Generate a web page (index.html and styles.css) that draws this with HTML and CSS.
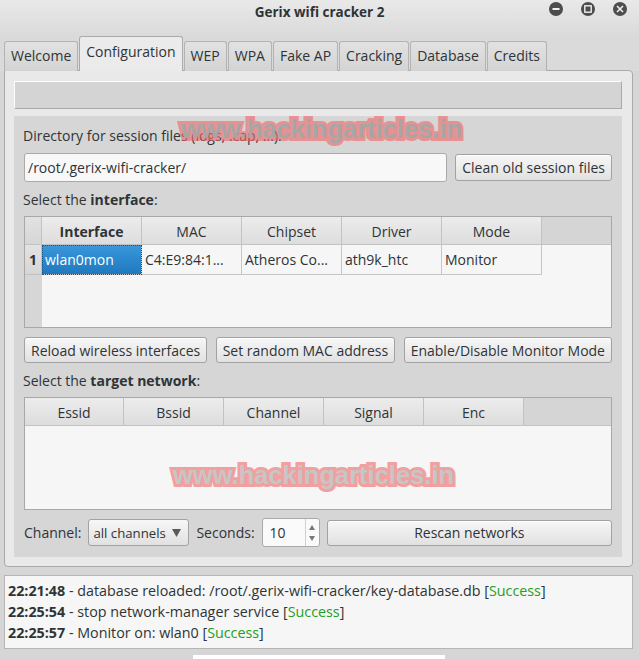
FILE: index.html
```html
<!DOCTYPE html>
<html lang="en">
<head>
  <meta charset="UTF-8">
  <title>Gerix wifi cracker 2</title>
  <link rel="stylesheet" href="styles.css">
</head>
<body>
  <div class="window">
    <header class="titlebar">
      <span></span>
      <span class="title">Gerix wifi cracker 2</span>
      <svg class="controls" width="80" height="16" viewBox="0 0 80 16">
        <circle cx="8" cy="8" r="7" fill="#4d4d4d"/>
        <rect x="4.5" y="7" width="7" height="2" fill="#f0f0f0"/>
        <circle cx="40" cy="8" r="7" fill="#4d4d4d"/>
        <rect x="36.8" y="4.8" width="6.4" height="6.4" fill="none" stroke="#f0f0f0" stroke-width="1.4"/>
        <circle cx="72" cy="8" r="7" fill="#4d4d4d"/>
        <path d="M69 5 L75 11 M75 5 L69 11" stroke="#f0f0f0" stroke-width="1.6"/>
      </svg>
    </header>

    <nav class="tabs">
      <div class="tab">Welcome</div>
      <div class="tab active">Configuration</div>
      <div class="tab">WEP</div>
      <div class="tab">WPA</div>
      <div class="tab">Fake AP</div>
      <div class="tab">Cracking</div>
      <div class="tab">Database</div>
      <div class="tab">Credits</div>
    </nav>

    <section class="panel">
      <div class="progress"></div>
      <div class="group">
        <p class="label">Directory for session files (logs, .cap, ...):</p>
        <div class="row dir-row">
          <div class="text-field">/root/.gerix-wifi-cracker/</div>
          <button class="btn">Clean old session files</button>
        </div>

        <p class="label">Select the <b>interface</b>:</p>
        <div class="table iface-table">
          <div class="th corner"></div>
          <div class="th sorted">Interface</div>
          <div class="th">MAC</div>
          <div class="th">Chipset</div>
          <div class="th">Driver</div>
          <div class="th">Mode</div>
          <div class="th filler"></div>

          <div class="row-head">1</div>
          <div class="td selected">wlan0mon</div>
          <div class="td">C4:E9:84:1...</div>
          <div class="td">Atheros Co...</div>
          <div class="td">ath9k_htc</div>
          <div class="td">Monitor</div>
          <div class="empty"></div>

          <div class="row-head rest"></div>
          <div class="empty wide"></div>
        </div>

        <div class="row btn-row">
          <button class="btn">Reload wireless interfaces</button>
          <button class="btn">Set random MAC address</button>
          <button class="btn">Enable/Disable Monitor Mode</button>
        </div>

        <p class="label">Select the <b>target network</b>:</p>
        <div class="table net-table">
          <div class="th">Essid</div>
          <div class="th">Bssid</div>
          <div class="th">Channel</div>
          <div class="th">Signal</div>
          <div class="th">Enc</div>
          <div class="th filler"></div>
          <div class="empty wide"></div>
        </div>

        <div class="row scan-row">
          <span>Channel:</span>
          <div class="combo">
            <span>all channels</span>
            <svg width="9" height="8" viewBox="0 0 9 8"><path d="M0 0 H9 L4.5 8 Z" fill="#5a5a5a"/></svg>
          </div>
          <span>Seconds:</span>
          <div class="spin">
            <span class="spin-value">10</span>
            <div class="spin-arrows">
              <svg width="6" height="5" viewBox="0 0 6 5"><path d="M0 5 L3 0 L6 5 Z" fill="#777"/></svg>
              <svg width="6" height="5" viewBox="0 0 6 5"><path d="M0 0 L3 5 L6 0 Z" fill="#777"/></svg>
            </div>
          </div>
          <button class="btn rescan">Rescan networks</button>
        </div>
      </div>
    </section>

    <section class="log">
      <p><b>22:21:48</b> - database reloaded: /root/.gerix-wifi-cracker/key-database.db [<span class="ok">Success</span>]</p>
      <p><b>22:25:54</b> - stop network-manager service [<span class="ok">Success</span>]</p>
      <p><b>22:25:57</b> - Monitor on: wlan0 [<span class="ok">Success</span>]</p>
    </section>

    <div class="dock"></div>

    <div class="watermark wm-top">
      <span class="wm-outline">www.hackingarticles.in</span>
      <span class="wm-fill">www.hackingarticles.in</span>
    </div>
    <div class="watermark wm-bottom">
      <span class="wm-outline">www.hackingarticles.in</span>
      <span class="wm-fill">www.hackingarticles.in</span>
    </div>
  </div>
</body>
</html>
```

FILE: styles.css
```css
* {
  box-sizing: border-box;
  margin: 0;
  padding: 0;
}

body {
  font-family: 'Open Sans', 'Noto Sans', sans-serif;
  font-size: 14px;
  color: #2e3436;
  background: #d6d6d6;
  width: 639px;
  height: 659px;
  overflow: hidden;
}

.window {
  position: relative;
  height: 659px;
}

/* title bar */
.titlebar {
  display: grid;
  grid-template-columns: 1fr auto 1fr;
  align-items: start;
  height: 36px;
  padding-top: 1px;
  background: linear-gradient(#e9e9e9, #dadada);
}

.title {
  font-weight: bold;
  font-size: 13.5px;
  line-height: 22px;
}

.controls {
  justify-self: end;
  margin-right: 11px;
}

/* tabs */
.tabs {
  display: flex;
  align-items: flex-end;
  height: 35px;
  padding-left: 4px;
  background: #dadada;
}

.tab {
  height: 30px;
  line-height: 28px;
  padding: 0 6px;
  border: 1px solid #b3b3b3;
  border-bottom: none;
  border-radius: 3px 3px 0 0;
  background: linear-gradient(#e2e2e2, #d3d3d3);
  margin-right: 1px;
}

.tab.active {
  position: relative;
  z-index: 1;
  height: 35px;
  line-height: 30px;
  background: #ebebeb;
  border-color: #aaaaaa;
}

/* tab page */
.panel {
  margin: -1px 6px 0 4px;
  border: 1px solid #a9a9a9;
  border-radius: 0 4px 4px 4px;
  background: #e9e9e9;
  padding: 10px 10px 9px 9px;
}

.progress {
  height: 28px;
  background: #d4d4d4;
  border-top: 1px solid #fdfdfd;
  border-left: 1px solid #fdfdfd;
  border-right: 1px solid #a9a9a9;
  border-bottom: 1px solid #a9a9a9;
  margin-bottom: 7px;
}

.group {
  background: #d6d6d6;
  padding: 10px 10px 10px 10px;
}

.label {
  height: 20px;
  line-height: 20px;
  margin-left: -1px;
}

.row {
  display: flex;
  align-items: center;
}

.dir-row {
  margin-top: 7px;
  height: 29px;
  gap: 8px;
}

.text-field {
  flex: 1;
  height: 29px;
  line-height: 27px;
  padding-left: 3px;
  background: #f8f8f8;
  border: 1px solid #aaaaaa;
  border-radius: 3px;
}

.btn {
  height: 26px;
  padding: 0 6px;
  font: inherit;
  color: #2e3436;
  white-space: nowrap;
  border: 1px solid #a2a2a2;
  border-radius: 3px;
  background: linear-gradient(#f7f7f7, #e1e1e1);
  box-shadow: inset 0 1px #ffffff;
}

.dir-row .btn {
  height: 27px;
  padding: 0 6px;
}

.group .label:nth-of-type(2),
.group .label:nth-of-type(3) {
  margin-top: 8px;
}

/* tables */
.table {
  margin-top: 6px;
  display: grid;
  border: 1px solid #a8a8a8;
  background: #f6f6f6;
}

.iface-table {
  height: 112px;
  grid-template-columns: 17px repeat(5, 100px) 1fr;
  grid-template-rows: 28px 30px 1fr;
}

.net-table {
  height: 113px;
  grid-template-columns: 99px repeat(4, 100px) 1fr;
  grid-template-rows: 28px 1fr;
}

.th {
  display: flex;
  align-items: center;
  justify-content: center;
  padding-top: 1px;
  background: linear-gradient(#ececec, #dddddd);
  border-right: 1px solid #c2c2c2;
  border-bottom: 1px solid #c2c2c2;
}

.th.sorted {
  font-weight: bold;
}

.th.filler {
  background: #d5d5d5;
  border-right: none;
}

.th.corner,
.row-head {
  background: linear-gradient(#e2e2e2, #d6d6d6);
}

.row-head {
  display: flex;
  align-items: center;
  justify-content: center;
  font-weight: bold;
  border-right: 1px solid #c2c2c2;
  border-bottom: 1px solid #c2c2c2;
}

.row-head.rest {
  background: #d6d6d6;
  border-bottom: none;
  border-right: none;
}

.td {
  display: flex;
  align-items: center;
  padding-left: 3px;
  border-right: 1px solid #c6c6c6;
  border-bottom: 1px solid #c6c6c6;
  white-space: nowrap;
  overflow: hidden;
}

.td.selected {
  color: #ffffff;
  background: linear-gradient(#3a97dc, #1f79bf);
  outline: 1px dotted #15548a;
  outline-offset: -1px;
}

.empty.wide {
  grid-column: 2 / -1;
}

.net-table .empty.wide {
  grid-column: 1 / -1;
}

.btn-row {
  margin-top: 9px;
  height: 26px;
  justify-content: space-between;
}

.scan-row {
  margin-top: 8px;
  height: 29px;
  gap: 7px;
}

.combo {
  display: flex;
  align-items: center;
  justify-content: space-between;
  width: 101px;
  height: 27px;
  padding: 0 7px 0 4px;
  font-size: 13.2px;
  border: 1px solid #a2a2a2;
  border-radius: 3px;
  background: linear-gradient(#f7f7f7, #e1e1e1);
}

.spin {
  display: flex;
  width: 58px;
  height: 29px;
  border: 1px solid #aaaaaa;
  border-radius: 3px;
  background: #fafafa;
}

.spin-value {
  flex: 1;
  line-height: 27px;
  padding-left: 7px;
}

.spin-arrows {
  width: 14px;
  border-left: 1px solid #cfcfcf;
  display: flex;
  flex-direction: column;
  align-items: center;
  justify-content: space-between;
  padding: 6px 0 5px;
}

.rescan {
  flex: 1;
}

/* log */
.log {
  margin: 8px 6px 0 4px;
  height: 74px;
  padding: 4px 3px;
  font-size: 14.3px;
  background: #f6f6f6;
  border: 1px solid #b5b5b5;
  line-height: 21px;
}

.ok {
  color: #22a022;
}

.dock {
  margin: 6px 0 0 193px;
  width: 252px;
  height: 10px;
  background: #ffffff;
}

/* watermark overlays */
.watermark {
  position: absolute;
  font-family: 'Liberation Sans', Arial, sans-serif;
  font-weight: bold;
  font-size: 25.5px;
  line-height: 26px;
  white-space: nowrap;
}

.watermark span {
  position: absolute;
  left: 0;
  top: 0;
}

.wm-outline {
  color: #f06a6a;
  -webkit-text-stroke: 6px #f06a6a;
  opacity: 0.62;
}

.wm-top {
  left: 181px;
  top: 116px;
}

.wm-top .wm-fill {
  color: #a6a6a6;
}

.wm-bottom {
  left: 173px;
  top: 462px;
}

.wm-bottom .wm-fill {
  color: #c6c6c6;
}
```
